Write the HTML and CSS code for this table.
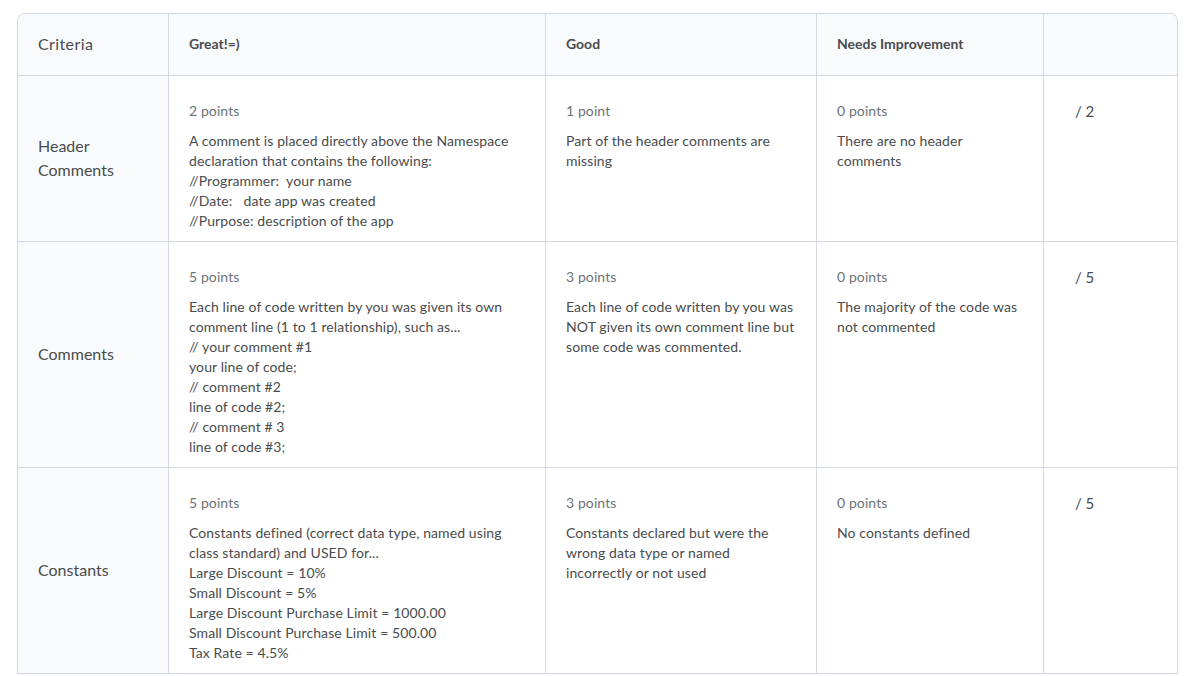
FILE: index.html
```html
<!DOCTYPE html>
<html lang="en">
<head>
<meta charset="utf-8">
<title>Rubric</title>
<link rel="stylesheet" href="styles.css">
</head>
<body>
<div class="rubric">
  <table class="rubric-table">
    <colgroup>
      <col class="c-crit">
      <col class="c-great">
      <col class="c-good">
      <col class="c-needs">
      <col class="c-score">
    </colgroup>
    <thead>
      <tr>
        <th class="crit-head">Criteria</th>
        <th class="level-head">Great!=)</th>
        <th class="level-head">Good</th>
        <th class="level-head">Needs Improvement</th>
        <th class="level-head last"></th>
      </tr>
    </thead>
    <tbody>
      <tr>
        <th class="crit">Header<br>Comments</th>
        <td class="level">
          <div class="points">2 points</div>
          <div class="desc">A comment is placed directly above the Namespace declaration that contains the following:<br>//Programmer:&nbsp; your name<br>//Date:&nbsp;&nbsp; date app was created<br>//Purpose: description of the app</div>
        </td>
        <td class="level">
          <div class="points">1 point</div>
          <div class="desc">Part of the header comments are missing</div>
        </td>
        <td class="level">
          <div class="points">0 points</div>
          <div class="desc">There are no header comments</div>
        </td>
        <td class="score last">/ 2</td>
      </tr>
      <tr>
        <th class="crit">Comments</th>
        <td class="level">
          <div class="points">5 points</div>
          <div class="desc">Each line of code written by you was given its own comment line (1 to 1 relationship), such as...<br>// your comment #1<br>your line of code;<br>// comment #2<br>line of code #2;<br>// comment # 3<br>line of code #3;</div>
        </td>
        <td class="level">
          <div class="points">3 points</div>
          <div class="desc">Each line of code written by you was NOT given its own comment line but some code was commented.</div>
        </td>
        <td class="level">
          <div class="points">0 points</div>
          <div class="desc">The majority of the code was not commented</div>
        </td>
        <td class="score last">/ 5</td>
      </tr>
      <tr>
        <th class="crit">Constants</th>
        <td class="level">
          <div class="points">5 points</div>
          <div class="desc">Constants defined (correct data type, named using class standard) and USED for...<br>Large Discount = 10%<br>Small Discount = 5%<br>Large Discount Purchase Limit = 1000.00<br>Small Discount Purchase Limit = 500.00<br>Tax Rate = 4.5%</div>
        </td>
        <td class="level">
          <div class="points">3 points</div>
          <div class="desc">Constants declared but were the wrong data type or named incorrectly or not used</div>
        </td>
        <td class="level">
          <div class="points">0 points</div>
          <div class="desc">No constants defined</div>
        </td>
        <td class="score last">/ 5</td>
      </tr>
    </tbody>
  </table>
</div>
</body>
</html>
```

FILE: styles.css
```css
* { box-sizing: border-box; }

html, body {
  margin: 0;
  background: #ffffff;
}

body {
  padding: 13px 0 0 17px;
  font-family: Lato, "Open Sans", sans-serif;
  color: #494c4e;
  overflow: hidden;
}

.rubric {
  width: 1161px;
  border: 1px solid #d3d9e3;
  border-bottom: none;
  border-radius: 8px 8px 0 0;
  overflow: hidden;
}

.rubric-table {
  width: 1159px;
  border-collapse: separate;
  border-spacing: 0;
  table-layout: fixed;
}

.c-crit { width: 151px; }
.c-great { width: 377px; }
.c-good { width: 271px; }
.c-needs { width: 227px; }
.c-score { width: 133px; }

th, td {
  border-right: 1px solid #d3d9e3;
  border-bottom: 1px solid #d3d9e3;
  padding: 0;
  text-align: left;
}

.last { border-right: none; }

thead th {
  height: 62px;
  background: #f9fafc;
  vertical-align: middle;
  padding: 0 20px;
}

.crit-head {
  font-size: 16px;
  font-weight: 400;
  letter-spacing: 0.4px;
  color: #494c4e;
  padding-bottom: 2px;
}

.level-head {
  font-size: 14px;
  font-weight: 700;
  color: #494c4e;
  padding-bottom: 2px;
}

.crit {
  background: #f9fafc;
  font-size: 16px;
  font-weight: 400;
  line-height: 24px;
  vertical-align: middle;
  padding: 0 20px 2px 20px;
  color: #494c4e;
}

.level {
  vertical-align: top;
  padding: 25px 20px 10px 20px;
  font-size: 14px;
  line-height: 20px;
  letter-spacing: 0.1px;
}

.points {
  color: #6e7376;
  margin-bottom: 10px;
}

.desc {
  color: #494c4e;
}

.score {
  vertical-align: top;
  padding: 24px 10px 0 31px;
  font-size: 15px;
  line-height: 22px;
  color: #494c4e;
}
```
